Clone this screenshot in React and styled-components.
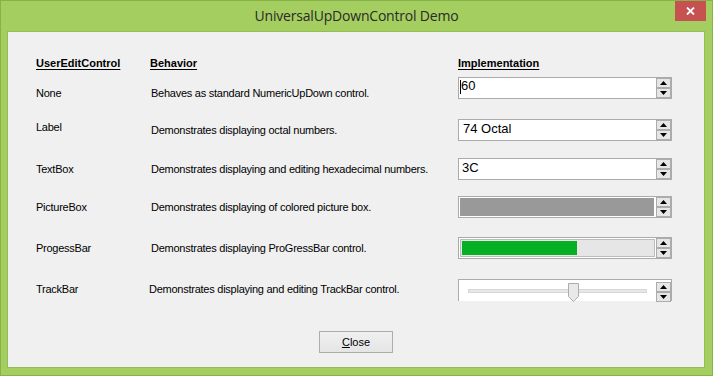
import React from 'react';
import styled, { createGlobalStyle } from 'styled-components';

const GlobalStyle = createGlobalStyle`
  html, body {
    margin: 0;
    padding: 0;
    background: #a4ce60;
  }
  * {
    box-sizing: border-box;
  }
`;

const Window = styled.div`
  width: 713px;
  height: 376px;
  background: #a4ce60;
  border: 1px solid #86b24a;
  display: flex;
  flex-direction: column;
`;

const TitleBar = styled.div`
  height: 30px;
  display: grid;
  grid-template-columns: 1fr auto 1fr;
  align-items: start;
`;

const Title = styled.div`
  grid-column: 2;
  font-family: "Open Sans", "Noto Sans", sans-serif;
  font-size: 14px;
  line-height: 20px;
  padding-top: 5px;
  color: #2a2a2a;
  letter-spacing: -0.2px;
`;

const CloseX = styled.div`
  grid-column: 3;
  justify-self: end;
  margin-right: 6px;
  width: 31px;
  height: 20px;
  background: #c75050;
  display: flex;
  align-items: center;
  justify-content: center;
`;

const Client = styled.div`
  flex: 1;
  margin: 0 7px 7px 6px;
  background: #f0f0f0;
  border: 1px solid #93be55;
  padding: 25px 0 0 28px;
  font-family: "Liberation Sans", Arial, sans-serif;
  font-size: 11px;
  line-height: 13px;
  color: #000;
  display: flex;
  flex-direction: column;
`;

const Row = styled.div`
  display: grid;
  grid-template-columns: 114px 308px 214px;
  align-items: start;
  height: ${p => p.h}px;
`;

const Head = styled.div`
  font-weight: bold;
  text-decoration: underline;
  text-underline-offset: 2px;
`;

const Cell = styled.div`
  margin-top: ${p => p.top || 0}px;
  margin-left: ${p => p.dx || 0}px;
  white-space: nowrap;
  letter-spacing: -0.25px;
`;

const Frame = styled.div`
  width: 214px;
  height: 22px;
  border: 1px solid #ababab;
  border-bottom: ${p => (p.open ? 'none' : '1px solid #ababab')};
  background: #fff;
  display: flex;
  align-items: stretch;
`;

const Field = styled.div`
  flex: 1;
  position: relative;
  font-size: 13px;
  line-height: 16px;
  padding: ${p => p.pt || 0}px 0 0 ${p => p.pl || 2}px;
`;

const Caret = styled.span`
  position: absolute;
  left: 1px;
  top: 2px;
  width: 1px;
  height: 14px;
  background: #000;
`;

const Picture = styled.div`
  margin: 1px 2px 1px 1px;
  width: 194px;
  background: #999999;
`;

const Progress = styled.div`
  margin: 1px 1px 1px 1px;
  width: 195px;
  border: 1px solid #bcbcbc;
  background: #e6e6e6;
  padding: 1px;
`;

const ProgressFill = styled.div`
  height: 100%;
  background: #06b025;
`;

const Track = styled.div`
  flex: 1;
  position: relative;
`;

const Rail = styled.div`
  position: absolute;
  left: 9px;
  top: 9px;
  width: 179px;
  height: 4px;
  background: #e7e7e7;
  border: 1px solid #d6d6d6;
`;

const Thumb = styled.svg`
  position: absolute;
  top: 3px;
  width: 11px;
  height: 19px;
`;

const Spin = styled.div`
  width: 15px;
  margin-top: ${p => p.mt || 0}px;
  height: 20px;
  display: flex;
  flex-direction: column;
`;

const SpinButton = styled.div`
  flex: 1;
  background: #e6e6e6;
  border: 1px solid #acacac;
  display: flex;
  align-items: center;
  justify-content: center;
`;

const Arrow = ({ down }) => (
  <svg width="7" height="4" viewBox="0 0 7 4">
    {down ? <polygon points="0,0 7,0 3.5,4" fill="#000" /> : <polygon points="0,4 7,4 3.5,0" fill="#000" />}
  </svg>
);

const Spinner = ({ mt }) => (
  <Spin mt={mt}>
    <SpinButton><Arrow /></SpinButton>
    <SpinButton><Arrow down /></SpinButton>
  </Spin>
);

const Footer = styled.div`
  display: flex;
  justify-content: center;
  margin-top: 30px;
  padding-right: 28px;
`;

const Button = styled.div`
  width: 74px;
  height: 22px;
  border: 1px solid #adadad;
  background: linear-gradient(#f0f0f0, #e5e5e5);
  display: flex;
  align-items: center;
  justify-content: center;
  font-size: 11px;
`;

const value = 60;

const App = () => (
  <>
    <GlobalStyle />
    <Window>
      <TitleBar>
        <Title>UniversalUpDownControl Demo</Title>
        <CloseX>
          <svg width="9" height="8" viewBox="0 0 9 8">
            <path d="M1 0.5 L8 7.5 M8 0.5 L1 7.5" stroke="#fff" strokeWidth="1.8" />
          </svg>
        </CloseX>
      </TitleBar>
      <Client>
        <Row h={20}>
          <Head>UserEditControl</Head>
          <Head>Behavior</Head>
          <Head>Implementation</Head>
        </Row>
        <Row h={42}>
          <Cell top={10}>None</Cell>
          <Cell top={10} dx={1}>Behaves as standard NumericUpDown control.</Cell>
          <Frame>
            <Field pt={0}><Caret />60</Field>
            <Spinner />
          </Frame>
        </Row>
        <Row h={39}>
          <Cell top={2}>Label</Cell>
          <Cell top={5} dx={1}>Demonstrates displaying octal numbers.</Cell>
          <Frame>
            <Field pt={1} pl={4}>74 Octal</Field>
            <Spinner />
          </Frame>
        </Row>
        <Row h={38}>
          <Cell top={5}>TextBox</Cell>
          <Cell top={5} dx={1}>Demonstrates displaying and editing hexadecimal numbers.</Cell>
          <Frame>
            <Field pt={1} pl={3}>3C</Field>
            <Spinner />
          </Frame>
        </Row>
        <Row h={41}>
          <Cell top={5}>PictureBox</Cell>
          <Cell top={5} dx={1}>Demonstrates displaying of colored picture box.</Cell>
          <Frame>
            <Picture />
            <Spinner />
          </Frame>
        </Row>
        <Row h={42}>
          <Cell top={5}>ProgessBar</Cell>
          <Cell top={5} dx={1}>Demonstrates displaying ProGressBar control.</Cell>
          <Frame>
            <Progress>
              <ProgressFill style={{ width: `${value}%` }} />
            </Progress>
            <Spinner />
          </Frame>
        </Row>
        <Row h={22}>
          <Cell top={4}>TrackBar</Cell>
          <Cell top={4} dx={-1}>Demonstrates displaying and editing TrackBar control.</Cell>
          <Frame open>
            <Track>
              <Rail />
              <Thumb viewBox="0 0 11 19" style={{ left: `${9 + (value / 100) * 168 - 1}px` }}>
                <path d="M0.5 0.5 H10.5 V13.5 L5.5 18.5 L0.5 13.5 Z" fill="#e9e9e9" stroke="#acacac" />
              </Thumb>
            </Track>
            <Spinner mt={2} />
          </Frame>
        </Row>
        <Footer>
          <Button><span><u>C</u>lose</span></Button>
        </Footer>
      </Client>
    </Window>
  </>
);

export default App;
